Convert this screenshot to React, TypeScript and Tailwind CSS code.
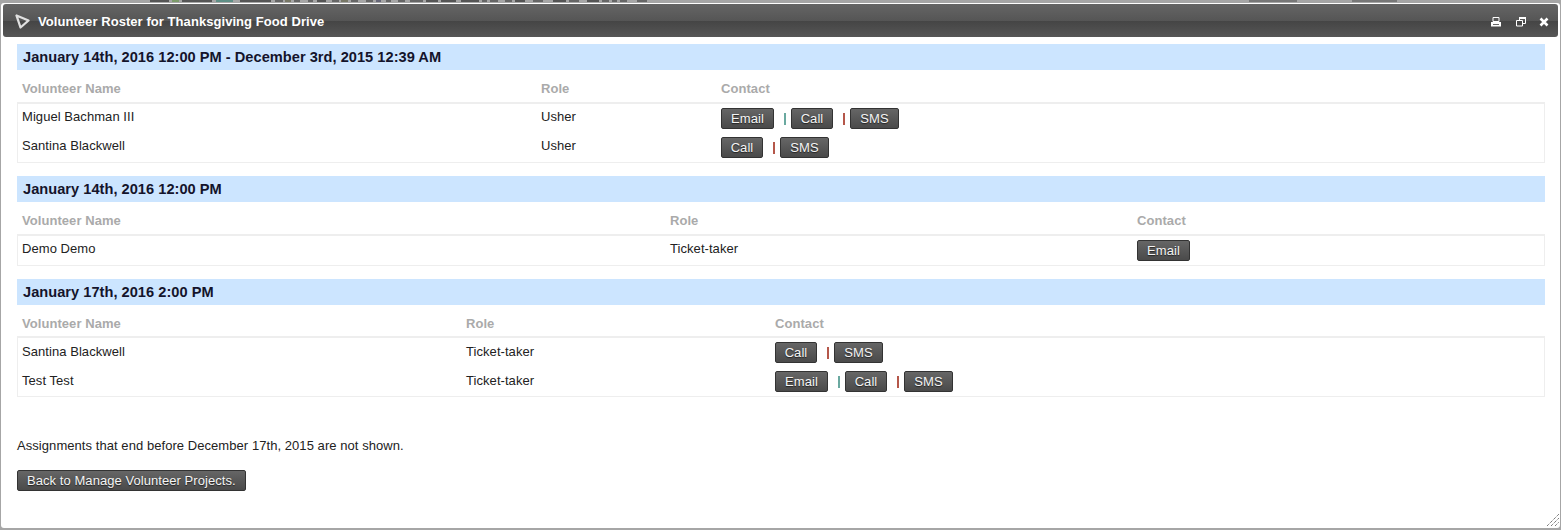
import React from "react";

type Contact = "Email" | "Call" | "SMS";

interface Volunteer {
  name: string;
  role: string;
  contacts: Contact[];
}

interface Assignment {
  title: string;
  columns: string;
  headerHeight: string;
  textOffset: string;
  volunteers: Volunteer[];
}

const assignments: Assignment[] = [
  {
    title: "January 14th, 2016 12:00 PM - December 3rd, 2015 12:39 AM",
    columns: "grid grid-cols-[519px_180px_1fr] px-[4px]",
    headerHeight: "h-[32px]",
    textOffset: "-mt-[3px]",
    volunteers: [
      { name: "Miguel Bachman III", role: "Usher", contacts: ["Email", "Call", "SMS"] },
      { name: "Santina Blackwell", role: "Usher", contacts: ["Call", "SMS"] },
    ],
  },
  {
    title: "January 14th, 2016 12:00 PM",
    columns: "grid grid-cols-[648px_467px_1fr] px-[4px]",
    headerHeight: "h-[32px]",
    textOffset: "-mt-[3px]",
    volunteers: [{ name: "Demo Demo", role: "Ticket-taker", contacts: ["Email"] }],
  },
  {
    title: "January 17th, 2016 2:00 PM",
    columns: "grid grid-cols-[444px_309px_1fr] px-[4px]",
    headerHeight: "h-[31px]",
    textOffset: "-mt-[1px]",
    volunteers: [
      { name: "Santina Blackwell", role: "Ticket-taker", contacts: ["Call", "SMS"] },
      { name: "Test Test", role: "Ticket-taker", contacts: ["Email", "Call", "SMS"] },
    ],
  },
];

// cut-off page text that peeks out above the dialog: [gap, width, colour]
const peeking: [number, number, string][] = [
  [150, 19, "bg-[#555]"], [3, 7, "bg-[#7c9a6a]"], [3, 30, "bg-[#555]"], [4, 17, "bg-[#5f8f86]"], [7, 31, "bg-[#555]"],
  [4, 8, "bg-[#666]"], [2, 6, "bg-[#776]"], [3, 6, "bg-[#666]"], [8, 5, "bg-[#666]"], [4, 9, "bg-[#555]"],
  [6, 7, "bg-[#666]"], [2, 7, "bg-[#776]"], [3, 7, "bg-[#666]"], [8, 7, "bg-[#666]"], [3, 5, "bg-[#667]"],
  [5, 5, "bg-[#666]"], [7, 7, "bg-[#666]"], [5, 13, "bg-[#666]"], [3, 12, "bg-[#555]"], [3, 15, "bg-[#555]"],
  [5, 18, "bg-[#555]"], [3, 5, "bg-[#666]"], [3, 8, "bg-[#666]"], [7, 7, "bg-[#666]"], [3, 10, "bg-[#555]"],
  [8, 10, "bg-[#666]"], [10, 13, "bg-[#555]"], [3, 10, "bg-[#666]"], [8, 12, "bg-[#555]"], [3, 7, "bg-[#666]"],
  [3, 5, "bg-[#666]"], [3, 7, "bg-[#666]"], [10, 10, "bg-[#666]"], [602, 48, "bg-[#777]"], [55, 45, "bg-[#777]"],
];

const buttonClass =
  "h-[21px] rounded-[2px] border border-[#333] bg-gradient-to-b from-[#666] to-[#4a4a4a] text-[13px] leading-[19px] text-[#f4f4f4] [text-shadow:0_1px_1px_#222]";

const contactWidths: Record<Contact, string> = {
  Email: "w-[53px]",
  Call: "w-[42px]",
  SMS: "w-[49px]",
};

const ContactButtons = ({ contacts }: { contacts: Contact[] }) => (
  <div className="flex items-center">
    {contacts.map((contact, i) => (
      <React.Fragment key={contact}>
        {i > 0 && (
          <span
            className={`ml-[10px] mr-[5px] h-[12px] w-[2px] ${contact === "Call" ? "bg-[#6aa9a0]" : "bg-[#b5574a]"}`}
          />
        )}
        <button className={`${buttonClass} ${contactWidths[contact]}`}>{contact}</button>
      </React.Fragment>
    ))}
  </div>
);

const Section = ({ assignment }: { assignment: Assignment }) => (
  <section className="mb-[13px]">
    <h2 className="h-[26px] bg-[#cce5ff] pl-[6px] text-[14.6px] font-bold leading-[26px] tracking-[0.03px] text-[#14142b]">
      {assignment.title}
    </h2>
    <div className={`${assignment.columns} ${assignment.headerHeight} items-start pt-[9px] font-bold text-[#aaa]`}>
      <span className="pl-px">Volunteer Name</span>
      <span className="pl-px">Role</span>
      <span className="pl-px">Contact</span>
    </div>
    <div className="border-x border-b border-t-2 border-[#eee]">
      {assignment.volunteers.map((volunteer) => (
        <div key={volunteer.name} className={`${assignment.columns} h-[29px] items-center`}>
          <span className={assignment.textOffset}>{volunteer.name}</span>
          <span className={assignment.textOffset}>{volunteer.role}</span>
          <ContactButtons contacts={volunteer.contacts} />
        </div>
      ))}
    </div>
  </section>
);

const App = () => (
  <div className="h-[530px] w-[1561px] overflow-hidden bg-[#a6a6a6] font-['Liberation_Sans',Arial,sans-serif] text-[13px] tracking-[0.06px] text-[#222]">
    <div className="flex h-[3px] items-start">
      {peeking.map(([gap, width, colour], i) => (
        <span key={i} className={`h-[2px] shrink-0 ${colour}`} style={{ marginLeft: gap, width }} />
      ))}
    </div>
    <div className="mx-[1px] flex h-[525px] flex-col rounded-[3px] bg-white pt-[1px]">
      <header className="mx-[2px] flex h-[33px] shrink-0 items-center rounded-[3px] bg-[linear-gradient(#656565,#555_52%,#454545_52%,#565656)] pl-[12px] pr-[9px]">
        <svg viewBox="0 0 15 15" className="mt-[1px] h-[15px] w-[15px]" fill="none" stroke="#e0e0e0" strokeWidth="2.300" strokeLinejoin="round">
          <path d="M1.500 1.500 L13.500 6.500 L5.500 13.500 Z" />
        </svg>
        <h1 className="ml-[8px] pt-[2px] text-[13px] font-bold text-white">Volunteer Roster for Thanksgiving Food Drive</h1>
        <div className="ml-auto flex items-center pt-[2px]">
          <svg viewBox="0 0 10 10" className="h-[10px] w-[10px]">
            <path d="M2 .5h6v4H2z" fill="none" stroke="#fff" />
            <path d="M0 5h10v4.500H0z" fill="#fff" />
            <path d="M2 7h6v1H2z" fill="#666" />
          </svg>
          <svg viewBox="0 0 10 10" className="ml-[15px] h-[10px] w-[10px]" fill="none" stroke="#fff">
            <path d="M3.500 3V1h6v5.500H7" />
            <path d="M3 1h7" strokeWidth="2" />
            <path d="M.5 3.500h6v5.500h-6z" />
          </svg>
          <svg viewBox="0 0 10 10" className="ml-[13px] h-[10px] w-[10px]" fill="none" stroke="#fff" strokeWidth="2.600">
            <path d="M1.500 1.500l7 7M8.500 1.500l-7 7" />
          </svg>
        </div>
      </header>
      <main className="flex flex-1 flex-col pl-[16px] pr-[15px] pt-[7px]">
        {assignments.map((assignment) => (
          <Section key={assignment.title} assignment={assignment} />
        ))}
        <p className="mt-[26px]">Assignments that end before December 17th, 2015 are not shown.</p>
        <div className="mt-[14px]">
          <button className={`${buttonClass} px-[9px]`}>Back to Manage Volunteer Projects.</button>
        </div>
      </main>
      <div className="relative h-0">
        <svg viewBox="0 0 12 12" className="absolute bottom-[2px] right-[1px] h-[12px] w-[12px]" stroke="#444" strokeDasharray="1 1">
          <path d="M0 12L12 0M4 12L12 4M8 12L12 8" />
        </svg>
      </div>
    </div>
  </div>
);

export default App;
